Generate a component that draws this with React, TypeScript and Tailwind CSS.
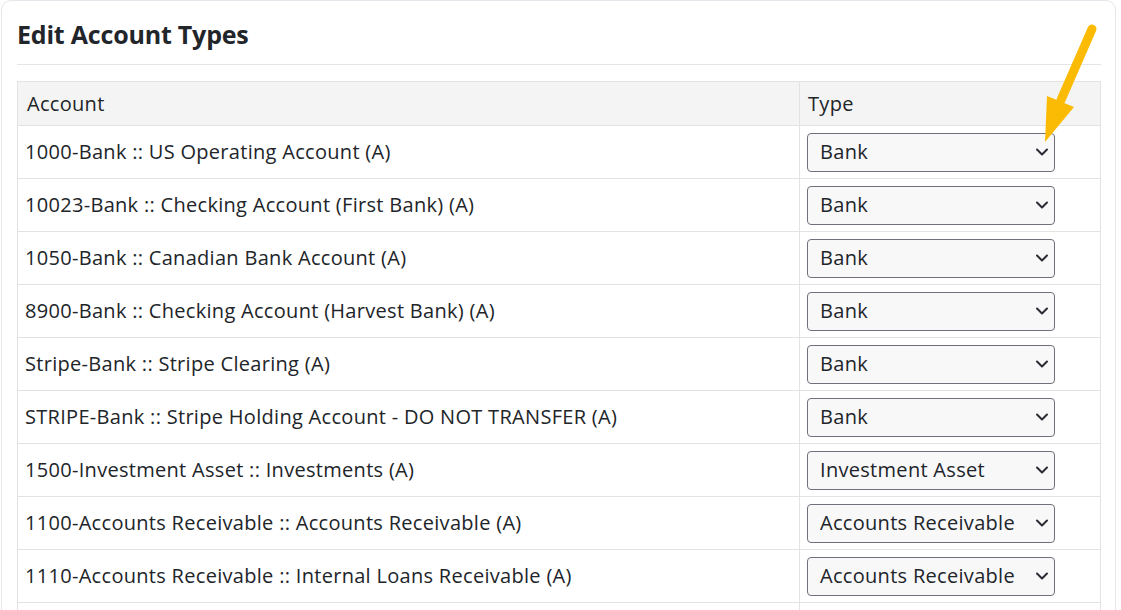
import React from "react";

const rows: { account: string; type: string }[] = [
  { account: "1000-Bank :: US Operating Account (A)", type: "Bank" },
  { account: "10023-Bank :: Checking Account (First Bank) (A)", type: "Bank" },
  { account: "1050-Bank :: Canadian Bank Account (A)", type: "Bank" },
  { account: "8900-Bank :: Checking Account (Harvest Bank) (A)", type: "Bank" },
  { account: "Stripe-Bank :: Stripe Clearing (A)", type: "Bank" },
  { account: "STRIPE-Bank :: Stripe Holding Account - DO NOT TRANSFER (A)", type: "Bank" },
  { account: "1500-Investment Asset :: Investments (A)", type: "Investment Asset" },
  { account: "1100-Accounts Receivable :: Accounts Receivable (A)", type: "Accounts Receivable" },
  { account: "1110-Accounts Receivable :: Internal Loans Receivable (A)", type: "Accounts Receivable" },
  { account: "1200-Other Current Asset :: Prepaid Expenses (A)", type: "Other Current Asset" },
];

const typeOptions = [
  "Bank",
  "Investment Asset",
  "Accounts Receivable",
  "Other Current Asset",
  "Fixed Asset",
  "Other Asset",
];

function TypeSelect({ value }: { value: string }) {
  return (
    <div className="relative w-[248px]">
      <select
        defaultValue={value}
        className="h-[39px] w-full appearance-none rounded-[4px] border border-[#70707c] bg-[#f8f8f9] pl-[12px] pr-8 text-[20px] tracking-[0.3px] text-[#212529] outline-none"
      >
        {typeOptions.map((o) => (
          <option key={o} value={o}>
            {o}
          </option>
        ))}
      </select>
      <svg
        className="pointer-events-none absolute right-[6px] top-[14px]"
        width="14"
        height="10"
        viewBox="0 0 14 10"
        fill="none"
      >
        <path d="M2 2.5l5 5 5-5" stroke="#2b2b33" strokeWidth="2" strokeLinecap="round" strokeLinejoin="round" />
      </svg>
    </div>
  );
}

export default function App() {
  return (
    <div
      className="relative h-[610px] w-[1121px] overflow-hidden bg-white pl-px text-[#212529]"
      style={{ fontFamily: '"Open Sans", "Noto Sans", sans-serif' }}
    >
      <div className="w-[1115px] rounded-[10px] border border-[#e3e6ea] pb-4 pl-[15px] pr-[14px]">
        <h2 className="flex h-[64px] items-center border-b border-[#e3e5e8] pt-[5px] text-[25px] font-bold tracking-[-0.2px] text-[#22252a]">
          Edit Account Types
        </h2>
        <table className="mt-4 w-full border-collapse border border-[#e3e3e3] text-[20px] tracking-[0.3px]">
          <thead>
            <tr className="h-[44px] bg-[#f4f4f4]">
              <th className="border border-[#e3e3e3] pl-[9px] text-left font-normal">Account</th>
              <th className="w-[301px] border border-[#e3e3e3] pl-[8px] text-left font-normal">Type</th>
            </tr>
          </thead>
          <tbody>
            {rows.map((r) => (
              <tr key={r.account} className="h-[53px]">
                <td className="border border-[#e3e3e3] pl-[7px] align-middle leading-none">{r.account}</td>
                <td className="border border-[#e3e3e3] pl-[7px] align-middle">
                  <TypeSelect value={r.type} />
                </td>
              </tr>
            ))}
          </tbody>
        </table>
      </div>

      {/* callout arrow pointing at the first dropdown */}
      <svg className="pointer-events-none absolute left-0 top-0" width="1121" height="610">
        <line x1="1092" y1="29" x2="1061" y2="100" stroke="#fbbb05" strokeWidth="9" strokeLinecap="round" />
        <polygon points="1047,96 1074,107 1045,142" fill="#fbbb05" />
      </svg>
    </div>
  );
}
